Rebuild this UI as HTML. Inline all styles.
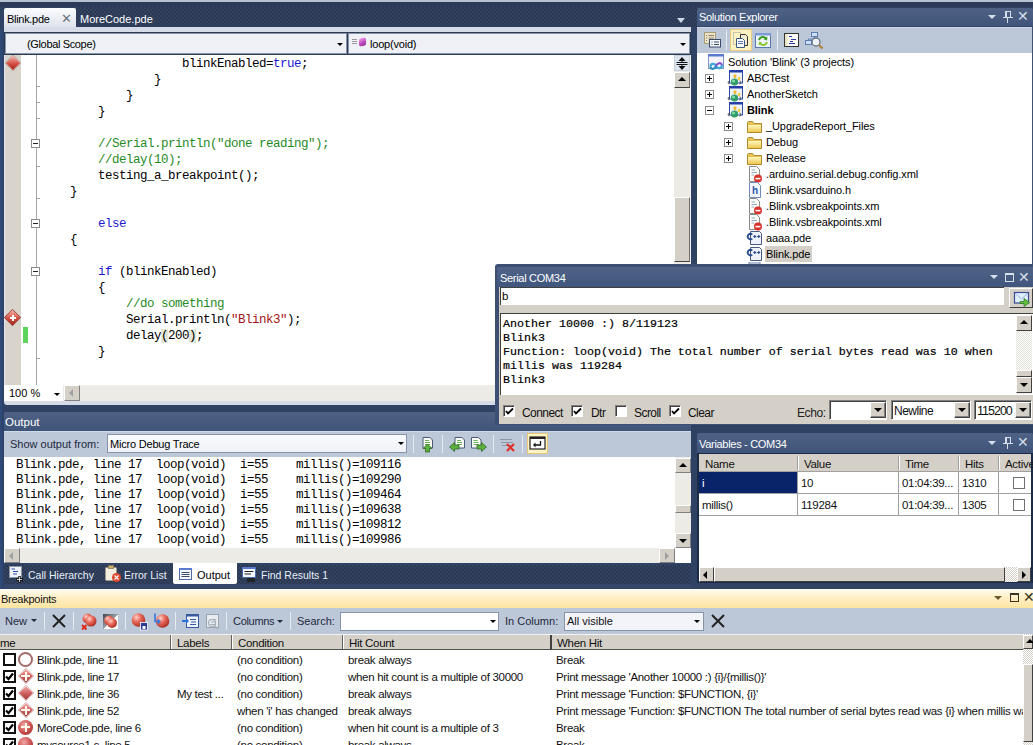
<!DOCTYPE html>
<html><head><meta charset="utf-8">
<style>
*{margin:0;padding:0;box-sizing:border-box}
html,body{width:1033px;height:745px;overflow:hidden}
body{position:relative;background:#304264;font-family:"Liberation Sans",sans-serif;font-size:11px;color:#000}
.a{position:absolute}
.t{position:absolute;white-space:pre;line-height:1}
.m{font-family:"Liberation Mono",monospace;font-size:11.67px}
.w{color:#fff}
.tb{background:linear-gradient(#4f6286,#3f5479)}
.gray{background:#d4d0c8}
.tex{position:absolute;background:repeating-conic-gradient(#2a3856 0 25%,#34445f 0 50%) 0 0/4px 4px}
.sep{position:absolute;width:1px;background:#8593ab;border-right:1px solid #e6ebf2}
</style></head><body>
<!-- top strip -->
<div class="a" style="left:0;top:0;width:1033px;height:2px;background:#b6c1d4"></div>
<div class="a" style="left:0;top:2px;width:1033px;height:5px;background:#2b3a57"></div>
<div class="a" style="left:0;top:30px;width:4px;height:560px;background:linear-gradient(90deg,#2f4c7c,#2c3f66)"></div>
<div class="tex" style="left:76px;top:7px;width:621px;height:17px"></div>
<div class="a" style="left:76px;top:24px;width:621px;height:3px;background:#2e3d5b"></div>

<!-- ===== Document well ===== -->
<div class="a" style="left:4px;top:8px;width:72px;height:24px;background:linear-gradient(#fbfcfd,#d6dde8);border-radius:2px 2px 0 0"></div>
<div class="t" style="left:7px;top:14px;font-size:11px;letter-spacing:-0.3px;color:#000">Blink.pde</div>
<div class="t" style="left:61px;top:12px;font-size:13px;color:#6f7580">&#x2715;</div>
<div class="t w" style="left:80px;top:14px;font-size:11px">MoreCode.pde</div>
<div class="a" style="left:677px;top:18px;width:0;height:0;border-left:4px solid transparent;border-right:4px solid transparent;border-top:5px solid #cfd8e6"></div>
<div class="a" style="left:4px;top:27px;width:687px;height:5px;background:#d5dce8"></div>
<div class="a" style="left:4px;top:32px;width:687px;height:23px;background:#2c3a52"></div>
<!-- combos -->
<div class="a" style="left:5px;top:33px;width:342px;height:21px;background:#eff1f7;border:1px solid #8795aa"></div>
<div class="t" style="left:27px;top:39px;letter-spacing:-0.35px">(Global Scope)</div>
<div class="a" style="left:337px;top:43px;border-left:3px solid transparent;border-right:3px solid transparent;border-top:3px solid #000"></div>
<div class="a" style="left:348px;top:33px;width:342px;height:21px;background:#eff1f7;border:1px solid #8795aa"></div>
<div class="t" style="left:370px;top:39px;letter-spacing:-0.2px">loop(void)</div>
<div class="a" style="left:352px;top:39px;width:5px;height:1px;background:#9a9a9a;box-shadow:0 2px 0 #9a9a9a,0 4px 0 #9a9a9a"></div>
<div class="a" style="left:359px;top:38px;width:7px;height:8px;background:linear-gradient(160deg,#f7a0f0,#c050c0 55%,#8a2a90);border-radius:2px;transform:skewY(-10deg)"></div>


<div class="a" style="left:680px;top:43px;border-left:3px solid transparent;border-right:3px solid transparent;border-top:3px solid #000"></div>

<!-- editor -->
<div class="a" style="left:4px;top:55px;width:687px;height:330px;background:#fff"></div>
<div class="a" style="left:4px;top:55px;width:17px;height:330px;background:#d8d4cb;border-left:1px solid #e4e4ea"></div>
<div class="a" style="left:36px;top:55px;width:1px;height:330px;background:#a5a5a5"></div>
<div class="a" style="left:7.5px;top:57.5px;width:10px;height:10px;transform:rotate(45deg);background:linear-gradient(135deg,#f7b5ad,#d0473c 60%,#a0281e);box-shadow:0 0 0 0.5px #8a2a20"></div>
<div class="a" style="left:7px;top:312px;width:11px;height:11px;transform:rotate(45deg);background:linear-gradient(135deg,#f7b5ad,#d0473c 60%,#a0281e);box-shadow:0 0 0 0.5px #8a2a20"></div>
<div class="a" style="left:10px;top:317px;width:6px;height:2px;background:#fff"></div><div class="a" style="left:12px;top:315px;width:2px;height:6px;background:#fff"></div>
<div class="a" style="left:23px;top:327px;width:5px;height:16px;background:#5ed35e"></div>

<div class="t m" style="left:182px;top:58px;line-height:13px;font-size:12.5px;letter-spacing:-0.5px"><span>blinkEnabled=</span><span style="color:#1a1ad0">true</span>;</div>
<div class="t m" style="left:154px;top:74px;line-height:13px;font-size:12.5px;letter-spacing:-0.5px">}</div>
<div class="t m" style="left:126px;top:90px;line-height:13px;font-size:12.5px;letter-spacing:-0.5px">}</div>
<div class="t m" style="left:98px;top:106px;line-height:13px;font-size:12.5px;letter-spacing:-0.5px">}</div>
<div class="t m" style="left:98px;top:138px;line-height:13px;font-size:12.5px;letter-spacing:-0.5px"><span style="color:#1f8a1f">//Serial.println("done reading");</span></div>
<div class="t m" style="left:98px;top:154px;line-height:13px;font-size:12.5px;letter-spacing:-0.5px"><span style="color:#1f8a1f">//delay(10);</span></div>
<div class="t m" style="left:98px;top:170px;line-height:13px;font-size:12.5px;letter-spacing:-0.5px">testing_a_breakpoint();</div>
<div class="t m" style="left:70px;top:186px;line-height:13px;font-size:12.5px;letter-spacing:-0.5px">}</div>
<div class="t m" style="left:98px;top:218px;line-height:13px;font-size:12.5px;letter-spacing:-0.5px"><span style="color:#1a1ad0">else</span></div>
<div class="t m" style="left:70px;top:234px;line-height:13px;font-size:12.5px;letter-spacing:-0.5px">{</div>
<div class="t m" style="left:98px;top:266px;line-height:13px;font-size:12.5px;letter-spacing:-0.5px"><span style="color:#1a1ad0">if</span> (blinkEnabled)</div>
<div class="t m" style="left:98px;top:282px;line-height:13px;font-size:12.5px;letter-spacing:-0.5px">{</div>
<div class="t m" style="left:126px;top:298px;line-height:13px;font-size:12.5px;letter-spacing:-0.5px"><span style="color:#1f8a1f">//do something</span></div>
<div class="t m" style="left:126px;top:314px;line-height:13px;font-size:12.5px;letter-spacing:-0.5px">Serial.println(<span style="color:#a31515">"Blink3"</span>);</div>
<div class="t m" style="left:126px;top:330px;line-height:13px;font-size:12.5px;letter-spacing:-0.5px">delay<span style="background:#e2e6d6">(</span>200<span style="background:#e2e6d6">)</span>;</div>
<div class="t m" style="left:98px;top:346px;line-height:13px;font-size:12.5px;letter-spacing:-0.5px">}</div>
<div class="a" style="left:31px;top:139px;width:9px;height:9px;background:#fff;border:1px solid #8c8c8c"></div><div class="a" style="left:33px;top:143px;width:5px;height:1px;background:#222"></div>
<div class="a" style="left:31px;top:219px;width:9px;height:9px;background:#fff;border:1px solid #8c8c8c"></div><div class="a" style="left:33px;top:223px;width:5px;height:1px;background:#222"></div>
<div class="a" style="left:31px;top:267px;width:9px;height:9px;background:#fff;border:1px solid #8c8c8c"></div><div class="a" style="left:33px;top:271px;width:5px;height:1px;background:#222"></div>
<div class="a" style="left:37px;top:86px;width:3px;height:1px;background:#a5a5a5"></div>
<div class="a" style="left:37px;top:102px;width:3px;height:1px;background:#a5a5a5"></div>
<div class="a" style="left:37px;top:118px;width:3px;height:1px;background:#a5a5a5"></div>
<div class="a" style="left:37px;top:166px;width:3px;height:1px;background:#a5a5a5"></div>
<div class="a" style="left:37px;top:198px;width:3px;height:1px;background:#a5a5a5"></div>
<div class="a" style="left:37px;top:358px;width:3px;height:1px;background:#a5a5a5"></div>

<!-- editor vscroll -->
<div class="a" style="left:674px;top:55px;width:17px;height:330px;background:#ecebe6;border-right:1px solid #f4f4f0"></div>
<div class="a" style="left:674px;top:55px;width:16px;height:16px;background:#dfe5ee;border:1px solid #c5cedb"></div>
<svg class="a" style="left:675px;top:56px" width="14" height="15"><path d="M7 1 L3.5 5 H10.5 Z M7 14 L3.5 10 H10.5 Z" fill="#111"/><path d="M1.5 6.5 H12.5 M1.5 8.5 H12.5" stroke="#111" stroke-width="1"/><path d="M7 4 V6 M7 9 V11" stroke="#111"/></svg>
<div class="a" style="left:674px;top:72px;width:16px;height:16px;background:#d4d0c8;border:1px solid;border-color:#fff #707070 #404040 #fff"></div>
<div class="a" style="left:678px;top:77px;border-left:4px solid transparent;border-right:4px solid transparent;border-bottom:4px solid #000"></div>
<div class="a" style="left:674px;top:197px;width:16px;height:65px;background:#d4d0c8;border:1px solid;border-color:#fff #707070 #404040 #fff"></div>

<!-- editor bottom bar -->
<div class="a" style="left:4px;top:385px;width:687px;height:16px;background:#ecebe6"></div>
<div class="a" style="left:4px;top:385px;width:59px;height:16px;background:#fff"></div>
<div class="t" style="left:9px;top:388px">100 %</div>
<div class="a" style="left:54px;top:393px;border-left:3px solid transparent;border-right:3px solid transparent;border-top:3px solid #000"></div>
<div class="a" style="left:64px;top:385px;width:16px;height:16px;background:#d4d0c8;border:1px solid;border-color:#fff #808080 #808080 #fff"></div>
<div class="a" style="left:69px;top:389px;border-top:4px solid transparent;border-bottom:4px solid transparent;border-right:4px solid #a0a0a0"></div>
<div class="a" style="left:4px;top:401px;width:687px;height:4px;background:#d5dce8;border-radius:0 0 3px 3px"></div>


<!-- ===== Solution Explorer ===== -->
<div class="a tb" style="left:697px;top:8px;width:336px;height:19px;border-radius:2px 2px 0 0"></div>
<div class="t w" style="left:699px;top:12px;font-size:11px;letter-spacing:-0.3px">Solution Explorer</div>
<div class="a" style="left:988px;top:15px;border-left:4px solid transparent;border-right:4px solid transparent;border-top:4px solid #d6deea"></div>
<div class="a" style="left:1005px;top:11px;width:6px;height:7px;border:1px solid #d6deea;border-left-width:2px"></div>
<div class="a" style="left:1003px;top:17px;width:10px;height:1px;background:#d6deea"></div>
<div class="a" style="left:1007px;top:18px;width:1px;height:5px;background:#d6deea"></div>
<div class="t" style="left:1017px;top:9px;font-size:14px;color:#d6deea">&#x2715;</div>
<div class="a" style="left:697px;top:26px;width:336px;height:1px;background:#35456a"></div><div class="a" style="left:697px;top:27px;width:335px;height:26px;background:#bcc7d8;border-top:1px solid #cdd8ea"></div>
<div class="a" style="left:1032px;top:27px;width:1px;height:237px;background:#40516f"></div>
<!-- toolbar icons -->
<svg class="a" style="left:703px;top:31px" width="19" height="17"><rect x="1.5" y="1.5" width="11" height="11" fill="#ece4c8" stroke="#a89c78"/><path d="M3 4.5H4M3 7H4M3 9.5H4M5.5 4.5H11M5.5 7H11" stroke="#8a8060"/><rect x="6.5" y="8.5" width="11" height="7.5" fill="#f6f8fc" stroke="#3a4a6a"/><path d="M8.5 11H9.5M8.5 13.5H9.5M11 11H16M11 13.5H16" stroke="#3a4a6a"/></svg>
<div class="sep" style="left:726px;top:30px;height:20px"></div>
<div class="a" style="left:730px;top:29px;width:22px;height:22px;background:#fdf2c2;border:1px solid #eacb7e"></div>
<svg class="a" style="left:732px;top:31px" width="18" height="18"><path d="M1.5 1.5H8.5V13.5H1.5Z" fill="none" stroke="#999" stroke-dasharray="1 1"/><path d="M8.5 3.5H13.5L15.5 5.5V14.5H8.5Z" fill="#f4ecd0" stroke="#333"/><path d="M4.5 7.5H10.5L12.5 9.5V16.5H4.5Z" fill="#fafcff" stroke="#3a5a8a"/><path d="M6 10.5H11M6 12.5H11" stroke="#5a7ab0"/></svg>
<svg class="a" style="left:754px;top:32px" width="18" height="17"><rect x="1.5" y="1.5" width="15" height="14" fill="#f0f4fa" stroke="#5a78b0"/><rect x="1" y="1" width="16" height="2.5" fill="#7a9ad8"/><path d="M5 8 A4 4 0 0 1 12 6.5" stroke="#3c9a20" stroke-width="2" fill="none"/><path d="M13.5 4.5 L13 8.5 L9.5 7.2Z" fill="#3c9a20"/><path d="M13 10 A4 4 0 0 1 6 11.5" stroke="#8ac830" stroke-width="2" fill="none"/><path d="M4.5 13.5 L5 9.5 L8.5 10.8Z" fill="#8ac830"/></svg>
<div class="sep" style="left:777px;top:30px;height:20px"></div>
<svg class="a" style="left:784px;top:33px" width="16" height="15"><rect x="0.5" y="0.5" width="14" height="13" fill="#fbfbf8" stroke="#333"/><rect x="1" y="1" width="2.5" height="12" fill="#e8e2c8"/><path d="M5 3.5H8M7 6.5H12M6 8.5H9M5 10.5H11" stroke="#2838a0"/></svg>
<svg class="a" style="left:805px;top:31px" width="19" height="19"><rect x="6.5" y="1.5" width="6" height="4" fill="#cfe0f5" stroke="#5b7fb5"/><rect x="0.5" y="9.5" width="6" height="4" fill="#cfe0f5" stroke="#5b7fb5"/><path d="M9.5 5.5V8H3.5V9.5" stroke="#5b7fb5" fill="none"/><circle cx="11" cy="11" r="4" fill="#eef3f8" stroke="#6a7480" stroke-width="1.3"/><path d="M14 14 L17.5 17.5" stroke="#b08040" stroke-width="2.2"/></svg>
<div class="a" style="left:1032px;top:27px;width:1px;height:237px;background:#40516f"></div>
<!-- tree -->
<div class="a" style="left:697px;top:53px;width:335px;height:211px;background:#fff;overflow:hidden"></div>
<svg width="0" height="0" style="position:absolute"><defs><linearGradient id="fg" x1="0" y1="0" x2="0" y2="1"><stop offset="0" stop-color="#fff6c0"/><stop offset="1" stop-color="#efc850"/></linearGradient></defs></svg>
<svg class="a" style="left:707px;top:54px" width="18" height="17"><rect x="1.5" y="0.5" width="15" height="14" fill="#f4f2fb" stroke="#7f95c8"/><rect x="1" y="0" width="16" height="2.5" fill="#5a7ad0"/><path d="M3.5 12.5 C3.5 9 8 9 9 12 C10 15 15 15 15 11" stroke="#3aa8d8" stroke-width="2.2" fill="none"/><path d="M9 12 C10 9 14 8 15 11" stroke="#8a50c8" stroke-width="2.2" fill="none"/><path d="M3.5 12.5 C3.5 16 8 15.5 9 12" stroke="#2f8ac0" stroke-width="2.2" fill="none"/></svg>
<div class="t" style="left:728px;top:57px;font-size:11px;letter-spacing:-0.1px;">Solution 'Blink' (3 projects)</div>
<div class="a" style="left:705px;top:74px;width:9px;height:9px;border:1px solid #8c8c8c;background:#fff"></div>
<div class="a" style="left:707px;top:78px;width:5px;height:1px;background:#000"></div>
<div class="a" style="left:709px;top:76px;width:1px;height:5px;background:#000"></div>
<svg class="a" style="left:727px;top:70px" width="17" height="16"><rect x="2.5" y="0.5" width="13" height="12.5" fill="#eef3fb" stroke="#3050a8"/><rect x="2" y="0" width="14" height="2.5" fill="#2440a8"/><path d="M8 3.5 L8.7 5.3 L10.5 5.5 L9 6.6 L9.5 8.5 L8 7.4 L6.5 8.5 L7 6.6 L5.5 5.5 L7.3 5.3Z" fill="#f0b820"/><path d="M12 6 L12.6 7.6 L14 7.8 L12.9 8.8 L13.2 10.4 L12 9.5 L10.8 10.4 L11.1 8.8 L10 7.8 L11.4 7.6Z" fill="#f4c830"/><circle cx="7.5" cy="12" r="3.6" fill="#2f9a6a"/><circle cx="6.6" cy="11" r="1.6" fill="#7fd8a0"/><path d="M2.5 11 L0.8 12.5 L2.5 14 M12.5 11 L14.2 12.5 L12.5 14" stroke="#222" stroke-width="0.9" fill="none"/></svg>
<div class="t" style="left:747px;top:73px;font-size:11px;letter-spacing:-0.1px;">ABCTest</div>
<div class="a" style="left:705px;top:90px;width:9px;height:9px;border:1px solid #8c8c8c;background:#fff"></div>
<div class="a" style="left:707px;top:94px;width:5px;height:1px;background:#000"></div>
<div class="a" style="left:709px;top:92px;width:1px;height:5px;background:#000"></div>
<svg class="a" style="left:727px;top:86px" width="17" height="16"><rect x="2.5" y="0.5" width="13" height="12.5" fill="#eef3fb" stroke="#3050a8"/><rect x="2" y="0" width="14" height="2.5" fill="#2440a8"/><path d="M8 3.5 L8.7 5.3 L10.5 5.5 L9 6.6 L9.5 8.5 L8 7.4 L6.5 8.5 L7 6.6 L5.5 5.5 L7.3 5.3Z" fill="#f0b820"/><path d="M12 6 L12.6 7.6 L14 7.8 L12.9 8.8 L13.2 10.4 L12 9.5 L10.8 10.4 L11.1 8.8 L10 7.8 L11.4 7.6Z" fill="#f4c830"/><circle cx="7.5" cy="12" r="3.6" fill="#2f9a6a"/><circle cx="6.6" cy="11" r="1.6" fill="#7fd8a0"/><path d="M2.5 11 L0.8 12.5 L2.5 14 M12.5 11 L14.2 12.5 L12.5 14" stroke="#222" stroke-width="0.9" fill="none"/></svg>
<div class="t" style="left:747px;top:89px;font-size:11px;letter-spacing:-0.1px;">AnotherSketch</div>
<div class="a" style="left:705px;top:106px;width:9px;height:9px;border:1px solid #8c8c8c;background:#fff"></div>
<div class="a" style="left:707px;top:110px;width:5px;height:1px;background:#000"></div>
<svg class="a" style="left:727px;top:102px" width="17" height="16"><rect x="2.5" y="0.5" width="13" height="12.5" fill="#eef3fb" stroke="#3050a8"/><rect x="2" y="0" width="14" height="2.5" fill="#2440a8"/><path d="M8 3.5 L8.7 5.3 L10.5 5.5 L9 6.6 L9.5 8.5 L8 7.4 L6.5 8.5 L7 6.6 L5.5 5.5 L7.3 5.3Z" fill="#f0b820"/><path d="M12 6 L12.6 7.6 L14 7.8 L12.9 8.8 L13.2 10.4 L12 9.5 L10.8 10.4 L11.1 8.8 L10 7.8 L11.4 7.6Z" fill="#f4c830"/><circle cx="7.5" cy="12" r="3.6" fill="#2f9a6a"/><circle cx="6.6" cy="11" r="1.6" fill="#7fd8a0"/><path d="M2.5 11 L0.8 12.5 L2.5 14 M12.5 11 L14.2 12.5 L12.5 14" stroke="#222" stroke-width="0.9" fill="none"/></svg>
<div class="t" style="left:747px;top:105px;font-size:11px;letter-spacing:-0.1px;font-weight:bold;">Blink</div>
<div class="a" style="left:724px;top:122px;width:9px;height:9px;border:1px solid #8c8c8c;background:#fff"></div>
<div class="a" style="left:726px;top:126px;width:5px;height:1px;background:#000"></div>
<div class="a" style="left:728px;top:124px;width:1px;height:5px;background:#000"></div>
<svg class="a" style="left:746px;top:119px" width="17" height="15"><path d="M1.5 3.5 V13.5 H15.5 V4.5 H8 L6.5 2.5 H2.5 Z" fill="#e8c250" stroke="#b08a28"/><path d="M2 6 H15 V13 H2 Z" fill="url(#fg)"/></svg>
<div class="t" style="left:766px;top:121px;font-size:11px;letter-spacing:-0.1px;">_UpgradeReport_Files</div>
<div class="a" style="left:724px;top:138px;width:9px;height:9px;border:1px solid #8c8c8c;background:#fff"></div>
<div class="a" style="left:726px;top:142px;width:5px;height:1px;background:#000"></div>
<div class="a" style="left:728px;top:140px;width:1px;height:5px;background:#000"></div>
<svg class="a" style="left:746px;top:135px" width="17" height="15"><path d="M1.5 3.5 V13.5 H15.5 V4.5 H8 L6.5 2.5 H2.5 Z" fill="#e8c250" stroke="#b08a28"/><path d="M2 6 H15 V13 H2 Z" fill="url(#fg)"/></svg>
<div class="t" style="left:766px;top:137px;font-size:11px;letter-spacing:-0.1px;">Debug</div>
<div class="a" style="left:724px;top:154px;width:9px;height:9px;border:1px solid #8c8c8c;background:#fff"></div>
<div class="a" style="left:726px;top:158px;width:5px;height:1px;background:#000"></div>
<div class="a" style="left:728px;top:156px;width:1px;height:5px;background:#000"></div>
<svg class="a" style="left:746px;top:151px" width="17" height="15"><path d="M1.5 3.5 V13.5 H15.5 V4.5 H8 L6.5 2.5 H2.5 Z" fill="#e8c250" stroke="#b08a28"/><path d="M2 6 H15 V13 H2 Z" fill="url(#fg)"/></svg>
<div class="t" style="left:766px;top:153px;font-size:11px;letter-spacing:-0.1px;">Release</div>
<svg class="a" style="left:748px;top:166px" width="15" height="17"><path d="M1.5 0.5 H8.5 L11.5 3.5 V15.5 H1.5 Z" fill="#fcfcf8" stroke="#8a8a8a"/><path d="M3.5 4H7M3.5 6.5H9M3.5 9H6" stroke="#9aaac0"/><circle cx="10" cy="12.5" r="4" fill="#d8302a"/><rect x="7.5" y="11.8" width="5" height="1.6" fill="#fff"/></svg>
<div class="t" style="left:766px;top:169px;font-size:11px;letter-spacing:-0.1px;">.arduino.serial.debug.config.xml</div>
<svg class="a" style="left:749px;top:182px" width="13" height="16"><path d="M0.5 0.5 H8.5 L11.5 3.5 V15.5 H0.5 Z" fill="#f2f6fc" stroke="#6f8cb8"/><text x="3" y="12" font-family="Liberation Sans" font-weight="bold" font-size="10" fill="#2a56a8">h</text></svg>
<div class="t" style="left:766px;top:185px;font-size:11px;letter-spacing:-0.1px;">.Blink.vsarduino.h</div>
<svg class="a" style="left:748px;top:198px" width="15" height="17"><path d="M1.5 0.5 H8.5 L11.5 3.5 V15.5 H1.5 Z" fill="#fcfcf8" stroke="#8a8a8a"/><path d="M3.5 4H7M3.5 6.5H9M3.5 9H6" stroke="#9aaac0"/><circle cx="10" cy="12.5" r="4" fill="#d8302a"/><rect x="7.5" y="11.8" width="5" height="1.6" fill="#fff"/></svg>
<div class="t" style="left:766px;top:201px;font-size:11px;letter-spacing:-0.1px;">.Blink.vsbreakpoints.xm</div>
<svg class="a" style="left:748px;top:214px" width="15" height="17"><path d="M1.5 0.5 H8.5 L11.5 3.5 V15.5 H1.5 Z" fill="#fcfcf8" stroke="#8a8a8a"/><path d="M3.5 4H7M3.5 6.5H9M3.5 9H6" stroke="#9aaac0"/><circle cx="10" cy="12.5" r="4" fill="#d8302a"/><rect x="7.5" y="11.8" width="5" height="1.6" fill="#fff"/></svg>
<div class="t" style="left:766px;top:217px;font-size:11px;letter-spacing:-0.1px;">.Blink.vsbreakpoints.xml</div>
<svg class="a" style="left:746px;top:230px" width="17" height="16"><path d="M4.5 1.5 H13.5 L15.5 3.5 V14.5 H4.5 Z" fill="#eef2fa" stroke="#4a5a78"/><path d="M6.3 4.6 A2.7 2.7 0 1 0 6.3 8.6" stroke="#254a90" stroke-width="1.8" fill="none"/><path d="M7.3 6.5H10.3M8.8 5V8M11.2 6.5H14.2M12.7 5V8" stroke="#254a90" stroke-width="1.2"/></svg>
<div class="t" style="left:766px;top:233px;font-size:11px;letter-spacing:-0.1px;">aaaa.pde</div>
<svg class="a" style="left:746px;top:246px" width="17" height="16"><path d="M4.5 1.5 H13.5 L15.5 3.5 V14.5 H4.5 Z" fill="#eef2fa" stroke="#4a5a78"/><path d="M6.3 4.6 A2.7 2.7 0 1 0 6.3 8.6" stroke="#254a90" stroke-width="1.8" fill="none"/><path d="M7.3 6.5H10.3M8.8 5V8M11.2 6.5H14.2M12.7 5V8" stroke="#254a90" stroke-width="1.2"/></svg>
<div class="a" style="left:765px;top:246px;width:47px;height:16px;background:#d4d0c8"></div>
<div class="t" style="left:766px;top:249px;font-size:11px;letter-spacing:-0.1px;">Blink.pde</div>
<svg class="a" style="left:748px;top:262px" width="15" height="2"><rect x="1" y="0" width="11" height="2" fill="#f4f7fc" stroke="#7088b0"/></svg>
<!-- ===== Output panel ===== -->
<div class="a tb" style="left:4px;top:412px;width:687px;height:19px;border-radius:2px 2px 0 0"></div>
<div class="t w" style="left:5px;top:417px;font-size:11.5px">Output</div>
<div class="a" style="left:4px;top:431px;width:687px;height:26px;background:#bcc7d8;border-top:1px solid #cdd8ea"></div>
<div class="t" style="left:10px;top:439px;font-size:11px;color:#1e2a3e">Show output from:</div>
<div class="a" style="left:107px;top:434px;width:300px;height:19px;background:linear-gradient(#fafbfd,#eef1f7);border:1px solid #8795aa"></div>
<div class="t" style="left:110px;top:439px;font-size:11px;letter-spacing:-0.2px">Micro Debug Trace</div>
<div class="a" style="left:398px;top:442px;border-left:3px solid transparent;border-right:3px solid transparent;border-top:3px solid #000"></div>
<div class="sep" style="left:413px;top:435px;height:18px"></div>
<svg class="a" style="left:421px;top:436px" width="14" height="17"><path d="M2 1.5 H9 L11.5 4 V12 H2 Z" fill="#fafbf6" stroke="#4a5a78"/><path d="M4 4.5H8M4 6.5H9M4 8.5H9" stroke="#6cae5a"/><path d="M6.5 8 L2 12.5 H4.5 V16 H8.5 V12.5 H11 Z" fill="#5cb040" stroke="#2f6a20" stroke-width="0.8"/></svg>
<div class="sep" style="left:442px;top:435px;height:18px"></div>
<svg class="a" style="left:448px;top:436px" width="18" height="17"><path d="M7 1.5 H14 L16.5 4 V12 H7 Z" fill="#fafbf6" stroke="#4a5a78"/><path d="M9 4.5H13M9 6.5H14M9 8.5H14" stroke="#6cae5a"/><path d="M1.5 11 L6.5 6.5 V9 H11 V13 H6.5 V15.5 Z" fill="#5cb040" stroke="#2f6a20" stroke-width="0.8"/></svg>
<svg class="a" style="left:470px;top:436px" width="18" height="17"><path d="M1.5 1.5 H8.5 L11 4 V12 H1.5 Z" fill="#fafbf6" stroke="#4a5a78"/><path d="M3.5 4.5H7.5M3.5 6.5H8.5M3.5 8.5H8.5" stroke="#6cae5a"/><path d="M16.5 11 L11.5 6.5 V9 H7 V13 H11.5 V15.5 Z" fill="#5cb040" stroke="#2f6a20" stroke-width="0.8"/></svg>
<div class="sep" style="left:493px;top:435px;height:18px"></div>
<svg class="a" style="left:499px;top:437px" width="18" height="16"><path d="M1 2.5H13M2 5.5H14M3 8.5H12" stroke="#8d96a8" stroke-width="1"/><path d="M8 7 L15 14 M15 7 L8 14" stroke="#e0302a" stroke-width="2.2"/></svg>
<div class="sep" style="left:522px;top:435px;height:18px"></div>
<div class="a" style="left:527px;top:433px;width:21px;height:21px;background:#fdf2c2;border:1px solid #e8c776"></div>
<svg class="a" style="left:529px;top:436px" width="17" height="15"><rect x="1" y="1" width="15" height="12" fill="#fff" stroke="#222" stroke-width="1.2"/><rect x="1" y="1" width="15" height="2" fill="#222"/><path d="M11.5 5 V9 H5" stroke="#111" stroke-width="1.3" fill="none"/><path d="M4 9 L6.5 6.5 V11.5 Z" fill="#111"/></svg>
<!-- text -->
<div class="a" style="left:4px;top:457px;width:687px;height:91px;background:#fff"></div>
<div class="t m" style="left:16px;top:458px;line-height:15px;font-size:12.5px;letter-spacing:-0.5px;color:#000">Blink.pde, line 17  loop(void)  i=55    millis()=109116
Blink.pde, line 17  loop(void)  i=55    millis()=109290
Blink.pde, line 17  loop(void)  i=55    millis()=109464
Blink.pde, line 17  loop(void)  i=55    millis()=109638
Blink.pde, line 17  loop(void)  i=55    millis()=109812
Blink.pde, line 17  loop(void)  i=55    millis()=109986</div>
<div class="a" style="left:675px;top:457px;width:16px;height:91px;background:#ecebe6"></div>
<div class="a" style="left:675px;top:458px;width:16px;height:15px;background:#d4d0c8;border:1px solid;border-color:#fff #808080 #808080 #fff"></div>
<div class="a" style="left:679px;top:463px;border-left:4px solid transparent;border-right:4px solid transparent;border-bottom:4px solid #000"></div>
<div class="a" style="left:675px;top:505px;width:16px;height:8px;background:#d4d0c8;border:1px solid;border-color:#fff #808080 #808080 #fff"></div>
<div class="a" style="left:675px;top:533px;width:16px;height:15px;background:#d4d0c8;border:1px solid;border-color:#fff #808080 #808080 #fff"></div>
<div class="a" style="left:679px;top:539px;border-left:4px solid transparent;border-right:4px solid transparent;border-top:4px solid #000"></div>
<div class="a" style="left:4px;top:548px;width:671px;height:15px;background:#ecebe6"></div>
<div class="a" style="left:4px;top:548px;width:16px;height:15px;background:#d4d0c8;border:1px solid;border-color:#fff #808080 #808080 #fff"></div>
<div class="a" style="left:9px;top:552px;border-top:4px solid transparent;border-bottom:4px solid transparent;border-right:4px solid #a0a0a0"></div>
<div class="a" style="left:659px;top:548px;width:16px;height:15px;background:#d4d0c8;border:1px solid;border-color:#fff #808080 #808080 #fff"></div>
<div class="a" style="left:665px;top:552px;border-top:4px solid transparent;border-bottom:4px solid transparent;border-left:4px solid #a0a0a0"></div>
<div class="a" style="left:675px;top:548px;width:16px;height:15px;background:#fff"></div>
<!-- tabs -->
<div class="tex" style="left:4px;top:565px;width:687px;height:19px"></div>
<div class="a" style="left:4px;top:584px;width:687px;height:4px;background:#34466a"></div>
<div class="a" style="left:173px;top:563px;width:64px;height:21px;background:#fff;border-radius:0 0 2px 2px"></div>
<svg class="a" style="left:8px;top:566px" width="18" height="18"><rect x="1.5" y="0.5" width="12" height="11" fill="#f0f4fa" stroke="#8a96a8"/><path d="M3.5 3H7M5 5.5H10M5 8H9" stroke="#3050b0"/><path d="M11.5 10 V17 M8 13.5 H15" stroke="#111" stroke-width="2.4"/><path d="M11.5 10.8 V16.2 M8.8 13.5 H14.2" stroke="#fff" stroke-width="0.8"/></svg>
<div class="t" style="left:28px;top:570px;font-size:10.5px;color:#e8eef8">Call Hierarchy</div>
<svg class="a" style="left:104px;top:565px" width="18" height="18"><rect x="1.5" y="2.5" width="11" height="13" rx="1" fill="#f2eee0" stroke="#a09a88"/><rect x="4.5" y="0.5" width="5" height="3" fill="#c8b070" stroke="#8a7a50" stroke-width="0.8"/><circle cx="12.5" cy="12.5" r="4.5" fill="#e0452e"/><path d="M10.5 10.5 L14.5 14.5 M14.5 10.5 L10.5 14.5" stroke="#fff" stroke-width="1.1"/></svg>
<div class="t" style="left:124px;top:570px;font-size:10.5px;color:#e8eef8">Error List</div>
<svg class="a" style="left:178px;top:567px" width="15" height="14"><rect x="1.5" y="1.5" width="12" height="11" fill="#f4f7fc" stroke="#4a6aa8"/><rect x="1" y="1" width="13" height="2" fill="#5a7ad0"/><path d="M3.5 5.5H11.5M3.5 7.5H11.5M3.5 9.5H11.5" stroke="#3a4a70"/></svg>
<div class="t" style="left:197px;top:570px;font-size:11px;color:#000">Output</div>
<svg class="a" style="left:241px;top:566px" width="16" height="18"><rect x="1.5" y="1.5" width="13" height="10" fill="#f4f7fc" stroke="#4a6aa8"/><rect x="1" y="1" width="14" height="2" fill="#5a7ad0"/><path d="M3.5 5.5H12.5M3.5 8H10" stroke="#222"/><circle cx="8" cy="14" r="2.2" fill="#222"/><circle cx="12" cy="14" r="2.2" fill="#222"/></svg>
<div class="t" style="left:261px;top:570px;font-size:10.5px;color:#e8eef8">Find Results 1</div>
<!-- ===== Variables ===== -->
<div class="a tb" style="left:697px;top:433px;width:336px;height:20px;border-radius:2px 2px 0 0"></div>
<div class="t w" style="left:699px;top:439px;font-size:11px;letter-spacing:-0.3px">Variables - COM34</div>
<div class="a" style="left:988px;top:441px;border-left:4px solid transparent;border-right:4px solid transparent;border-top:4px solid #d6deea"></div>
<div class="a" style="left:1005px;top:437px;width:6px;height:7px;border:1px solid #d6deea;border-left-width:2px"></div>
<div class="a" style="left:1003px;top:443px;width:10px;height:1px;background:#d6deea"></div>
<div class="a" style="left:1007px;top:444px;width:1px;height:5px;background:#d6deea"></div>
<div class="t" style="left:1017px;top:435px;font-size:14px;color:#d6deea">&#x2715;</div>
<div class="a" style="left:697px;top:453px;width:336px;height:130px;background:#1b2a45"></div>
<div class="a" style="left:699px;top:454px;width:332px;height:128px;background:#fff"></div>
<div class="a" style="left:699px;top:454px;width:332px;height:18px;background:#d4d0c8;border-bottom:1px solid #a0a0a0"></div>
<div class="t" style="left:705px;top:459px;font-size:11.5px;letter-spacing:-0.3px;color:#111">Name</div>
<div class="t" style="left:804px;top:459px;font-size:11.5px;letter-spacing:-0.3px;color:#111">Value</div>
<div class="a" style="left:797px;top:456px;width:2px;height:14px;background:#fff;border-left:1px solid #a0a0a0"></div>
<div class="t" style="left:905px;top:459px;font-size:11.5px;letter-spacing:-0.3px;color:#111">Time</div>
<div class="a" style="left:898px;top:456px;width:2px;height:14px;background:#fff;border-left:1px solid #a0a0a0"></div>
<div class="t" style="left:965px;top:459px;font-size:11.5px;letter-spacing:-0.3px;color:#111">Hits</div>
<div class="a" style="left:958px;top:456px;width:2px;height:14px;background:#fff;border-left:1px solid #a0a0a0"></div>
<div class="t" style="left:1005px;top:459px;font-size:11.5px;letter-spacing:-0.3px;color:#111">Active</div>
<div class="a" style="left:998px;top:456px;width:2px;height:14px;background:#fff;border-left:1px solid #a0a0a0"></div>
<div class="a" style="left:699px;top:472px;width:99px;height:21px;background:#0a246a"></div>
<div class="t" style="left:702px;top:478px;font-size:11.5px;letter-spacing:-0.3px;color:#fff">i</div>
<div class="t" style="left:801px;top:478px;font-size:11.5px;letter-spacing:-0.3px;color:#111">10</div>
<div class="t" style="left:902px;top:478px;font-size:11.5px;letter-spacing:-0.3px;color:#111">01:04:39...</div>
<div class="t" style="left:962px;top:478px;font-size:11.5px;letter-spacing:-0.3px;color:#111">1310</div>
<div class="a" style="left:1013px;top:477px;width:12px;height:12px;background:#fff;border:1px solid #707070"></div>
<div class="a" style="left:699px;top:493px;width:332px;height:1px;background:#a0a0a0"></div>
<div class="t" style="left:702px;top:500px;font-size:11.5px;letter-spacing:-0.3px;color:#111">millis()</div>
<div class="t" style="left:801px;top:500px;font-size:11.5px;letter-spacing:-0.3px;color:#111">119284</div>
<div class="t" style="left:902px;top:500px;font-size:11.5px;letter-spacing:-0.3px;color:#111">01:04:39...</div>
<div class="t" style="left:962px;top:500px;font-size:11.5px;letter-spacing:-0.3px;color:#111">1305</div>
<div class="a" style="left:1013px;top:499px;width:12px;height:12px;background:#fff;border:1px solid #707070"></div>
<div class="a" style="left:699px;top:515px;width:332px;height:1px;background:#a0a0a0"></div>
<div class="a" style="left:797px;top:472px;width:1px;height:44px;background:#a0a0a0"></div>
<div class="a" style="left:898px;top:472px;width:1px;height:44px;background:#a0a0a0"></div>
<div class="a" style="left:958px;top:472px;width:1px;height:44px;background:#a0a0a0"></div>
<div class="a" style="left:998px;top:472px;width:1px;height:44px;background:#a0a0a0"></div>
<div class="a" style="left:699px;top:567px;width:332px;height:15px;background:#d4d0c8"></div>
<div class="a" style="left:699px;top:567px;width:15px;height:15px;background:#d4d0c8;border:1px solid;border-color:#fff #404040 #404040 #fff"></div>
<div class="a" style="left:703px;top:571px;border-top:4px solid transparent;border-bottom:4px solid transparent;border-right:4px solid #000"></div>
<div class="a" style="left:714px;top:567px;width:291px;height:15px;background:#d4d0c8;border:1px solid;border-color:#fff #404040 #404040 #fff"></div>
<div class="a" style="left:1005px;top:567px;width:13px;height:15px;background:repeating-conic-gradient(#d4d0c8 0 25%,#fff 0 50%) 0 0/2px 2px"></div>
<div class="a" style="left:1017px;top:567px;width:14px;height:15px;background:#d4d0c8;border:1px solid;border-color:#fff #404040 #404040 #fff"></div>
<div class="a" style="left:1022px;top:571px;border-top:4px solid transparent;border-bottom:4px solid transparent;border-left:4px solid #000"></div>


<!-- ===== Breakpoints ===== -->
<div class="a" style="left:0;top:589px;width:1033px;height:19px;background:linear-gradient(#fffcf4,#fff0c8 40%,#fde4a0)"></div>
<div class="t" style="left:1px;top:594px;font-size:11px;letter-spacing:-0.25px;color:#111">Breakpoints</div>
<div class="a" style="left:994px;top:596px;border-left:4px solid transparent;border-right:4px solid transparent;border-top:4px solid #6b5a2a"></div>
<div class="a" style="left:1010px;top:593px;width:9px;height:9px;border:1px solid #3a3320;border-top-width:2px"></div>
<div class="t" style="left:1023px;top:590px;font-size:14px;color:#3a3320">&#x2715;</div>
<div class="a" style="left:0;top:608px;width:1033px;height:26px;background:#bcc7d8"></div>
<div class="t" style="left:5px;top:616px;font-size:11px;color:#1e2a3e">New</div>
<div class="a" style="left:31px;top:619px;border-left:3px solid transparent;border-right:3px solid transparent;border-top:3px solid #1e2a3e"></div>
<div class="sep" style="left:44px;top:612px;height:18px"></div>
<svg class="a" style="left:52px;top:614px" width="14" height="14"><path d="M1 1L13 13M13 1L1 13" stroke="#222" stroke-width="2"/></svg>
<div class="sep" style="left:73px;top:612px;height:18px"></div>
<svg width="0" height="0" style="position:absolute"><defs><radialGradient id="rb" cx="0.35" cy="0.3" r="0.75"><stop offset="0" stop-color="#ffd0c8"/><stop offset="0.45" stop-color="#e86a5c"/><stop offset="1" stop-color="#a8281e"/></radialGradient><linearGradient id="gw" x1="0" y1="0" x2="1" y2="1"><stop offset="0" stop-color="#404448"/><stop offset="0.5" stop-color="#9aa0a8"/><stop offset="0.5" stop-color="#fff"/><stop offset="1" stop-color="#fff"/></linearGradient></defs></svg>
<svg class="a" style="left:79px;top:612px" width="19" height="19"><circle cx="8.5" cy="6.5" r="5" fill="url(#rb)"/><circle cx="12" cy="9" r="5.5" fill="url(#rb)"/><path d="M3 13 L7.5 17.5 M7.5 13 L3 17.5" stroke="#e02a20" stroke-width="2"/></svg>
<svg class="a" style="left:102px;top:613px" width="17" height="17"><path d="M1 1 H16 V16 H1 Z" fill="url(#gw)"/><circle cx="7" cy="7.5" r="4.8" fill="url(#rb)"/><circle cx="10" cy="10" r="5" fill="url(#rb)"/></svg>
<div class="sep" style="left:125px;top:612px;height:18px"></div>
<svg class="a" style="left:130px;top:612px" width="19" height="19"><circle cx="8.5" cy="8" r="6.8" fill="url(#rb)"/><rect x="10.5" y="10.5" width="7" height="7.5" fill="#2a3a90" stroke="#fff" stroke-width="0.8"/><rect x="12.5" y="14" width="3" height="3" fill="#fff"/></svg>
<svg class="a" style="left:152px;top:612px" width="18" height="19"><circle cx="10.5" cy="9" r="6.8" fill="url(#rb)"/><path d="M3 1.5 V9.5 H7" stroke="#3a78d8" stroke-width="1.6" fill="none"/><path d="M9 9.5 L5.5 6.5 V12.5 Z" fill="#3a78d8"/></svg>
<div class="sep" style="left:175px;top:612px;height:18px"></div>
<svg class="a" style="left:181px;top:613px" width="19" height="17"><rect x="5.5" y="1.5" width="12" height="13" fill="#eef4fc" stroke="#3a5aa0"/><rect x="5" y="1" width="13" height="2.5" fill="#3a5aa0"/><path d="M9 6.5H15M10 9H15M9 11.5H15" stroke="#3a5aa0"/><path d="M1 8 H6" stroke="#2a70d8" stroke-width="2"/><path d="M8 8 L5 5 V11 Z" fill="#2a70d8"/></svg>
<svg class="a" style="left:203px;top:613px" width="17" height="17"><rect x="3.5" y="1.5" width="12" height="13" fill="#e8ecf0" stroke="#9aa4b0"/><path d="M7 6.5H13M8 9H13M7 11.5H13" stroke="#a8b0bc"/><circle cx="9" cy="10" r="3.5" fill="none" stroke="#a8b0bc" stroke-width="1.2"/><path d="M11.5 12.5 L15 16" stroke="#a8b0bc" stroke-width="1.5"/></svg>
<div class="sep" style="left:226px;top:612px;height:18px"></div>
<div class="t" style="left:233px;top:616px;font-size:11px;letter-spacing:-0.3px;color:#1e2a3e">Columns</div>
<div class="a" style="left:277px;top:620px;border-left:3px solid transparent;border-right:3px solid transparent;border-top:3px solid #1e2a3e"></div>
<div class="sep" style="left:290px;top:612px;height:18px"></div>
<div class="t" style="left:297px;top:616px;font-size:11px;color:#1e2a3e">Search:</div>
<div class="a" style="left:340px;top:612px;width:159px;height:19px;background:#fff;border:1px solid #8795aa"></div>
<div class="a" style="left:490px;top:620px;border-left:3px solid transparent;border-right:3px solid transparent;border-top:3px solid #000"></div>
<div class="t" style="left:505px;top:616px;font-size:11px;color:#1e2a3e">In Column:</div>
<div class="a" style="left:564px;top:612px;width:140px;height:19px;background:#f2f4f9;border:1px solid #8795aa"></div>
<div class="t" style="left:567px;top:616px;font-size:11px;color:#111">All visible</div>
<div class="a" style="left:694px;top:620px;border-left:3px solid transparent;border-right:3px solid transparent;border-top:3px solid #000"></div>
<svg class="a" style="left:711px;top:614px" width="14" height="14"><path d="M1 1L13 13M13 1L1 13" stroke="#222" stroke-width="2"/></svg>
<!-- header -->
<div class="a" style="left:0;top:634px;width:1023px;height:17px;background:#d4d0c8;border-top:1px solid #f4f4f4;border-bottom:2px solid #505050"></div>
<div class="a" style="left:0;top:650px;width:1023px;height:95px;background:#fff"></div>
<div class="t" style="left:0px;top:638px;font-size:11.5px;letter-spacing:-0.3px;color:#111">me</div>
<div class="t" style="left:177px;top:638px;font-size:11.5px;letter-spacing:-0.3px;color:#111">Labels</div>
<div class="t" style="left:238px;top:638px;font-size:11.5px;letter-spacing:-0.3px;color:#111">Condition</div>
<div class="t" style="left:349px;top:638px;font-size:11.5px;letter-spacing:-0.3px;color:#111">Hit Count</div>
<div class="t" style="left:557px;top:638px;font-size:11.5px;letter-spacing:-0.3px;color:#111">When Hit</div>
<div class="a" style="left:170px;top:635px;width:2px;height:14px;background:#fff;border-left:1px solid #606060"></div>
<div class="a" style="left:231px;top:635px;width:2px;height:14px;background:#fff;border-left:1px solid #606060"></div>
<div class="a" style="left:342px;top:635px;width:2px;height:14px;background:#fff;border-left:1px solid #606060"></div>
<div class="a" style="left:550px;top:635px;width:2px;height:15px;background:#404040"></div>
<div class="a" style="left:3px;top:653px;width:13px;height:13px;background:#fff;border:2px solid #111"></div>
<div class="a" style="left:18px;top:652px;width:15px;height:15px;border-radius:50%;border:2px solid #a36b6b;background:#fff"></div>
<div class="t" style="left:37px;top:655px;font-size:11.5px;letter-spacing:-0.3px;color:#111">Blink.pde, line 11</div>
<div class="t" style="left:237px;top:655px;font-size:11.5px;letter-spacing:-0.3px;color:#111">(no condition)</div>
<div class="t" style="left:348px;top:655px;font-size:11.5px;letter-spacing:-0.3px;color:#111">break always</div>
<div class="t" style="left:556px;top:655px;font-size:11.5px;letter-spacing:-0.3px;color:#111;width:467px;overflow:hidden">Break</div>
<div class="a" style="left:3px;top:670px;width:13px;height:13px;background:#fff;border:2px solid #111"></div>
<svg class="a" style="left:5px;top:672px" width="9" height="9"><path d="M1 4.5 L3.5 7 L8 1.5" stroke="#000" stroke-width="2.2" fill="none"/></svg>
<div class="a" style="left:20.5px;top:671px;width:10px;height:10px;transform:rotate(45deg);background:linear-gradient(135deg,#f4b4b0,#d06262 50%,#a03838);box-shadow:0 0 0 0.5px #9a4040"></div>
<div class="a" style="left:21px;top:675px;width:9px;height:2px;background:#fff8ec"></div><div class="a" style="left:24.5px;top:671.5px;width:2px;height:9px;background:#fff8ec"></div>
<div class="t" style="left:37px;top:672px;font-size:11.5px;letter-spacing:-0.3px;color:#111">Blink.pde, line 17</div>
<div class="t" style="left:237px;top:672px;font-size:11.5px;letter-spacing:-0.3px;color:#111">(no condition)</div>
<div class="t" style="left:348px;top:672px;font-size:11.5px;letter-spacing:-0.3px;color:#111">when hit count is a multiple of 30000</div>
<div class="t" style="left:556px;top:672px;font-size:11.5px;letter-spacing:-0.3px;color:#111;width:467px;overflow:hidden">Print message 'Another 10000 :) {i}/{millis()}'</div>
<div class="a" style="left:3px;top:687px;width:13px;height:13px;background:#fff;border:2px solid #111"></div>
<svg class="a" style="left:5px;top:689px" width="9" height="9"><path d="M1 4.5 L3.5 7 L8 1.5" stroke="#000" stroke-width="2.2" fill="none"/></svg>
<div class="a" style="left:20.5px;top:688px;width:10px;height:10px;transform:rotate(45deg);background:linear-gradient(135deg,#f4b4b0,#d06262 50%,#a03838);box-shadow:0 0 0 0.5px #9a4040"></div>
<div class="t" style="left:37px;top:689px;font-size:11.5px;letter-spacing:-0.3px;color:#111">Blink.pde, line 36</div>
<div class="t" style="left:177px;top:689px;font-size:11.5px;letter-spacing:-0.3px;color:#111">My test ...</div>
<div class="t" style="left:237px;top:689px;font-size:11.5px;letter-spacing:-0.3px;color:#111">(no condition)</div>
<div class="t" style="left:348px;top:689px;font-size:11.5px;letter-spacing:-0.3px;color:#111">break always</div>
<div class="t" style="left:556px;top:689px;font-size:11.5px;letter-spacing:-0.3px;color:#111;width:467px;overflow:hidden">Print message 'Function: $FUNCTION, {i}'</div>
<div class="a" style="left:3px;top:704px;width:13px;height:13px;background:#fff;border:2px solid #111"></div>
<svg class="a" style="left:5px;top:706px" width="9" height="9"><path d="M1 4.5 L3.5 7 L8 1.5" stroke="#000" stroke-width="2.2" fill="none"/></svg>
<div class="a" style="left:20.5px;top:705px;width:10px;height:10px;transform:rotate(45deg);background:linear-gradient(135deg,#f4b4b0,#d06262 50%,#a03838);box-shadow:0 0 0 0.5px #9a4040"></div>
<div class="a" style="left:21px;top:709px;width:9px;height:2px;background:#fff8ec"></div><div class="a" style="left:24.5px;top:705.5px;width:2px;height:9px;background:#fff8ec"></div>
<div class="t" style="left:37px;top:706px;font-size:11.5px;letter-spacing:-0.3px;color:#111">Blink.pde, line 52</div>
<div class="t" style="left:237px;top:706px;font-size:11.5px;letter-spacing:-0.3px;color:#111">when 'i' has changed</div>
<div class="t" style="left:348px;top:706px;font-size:11.5px;letter-spacing:-0.3px;color:#111">break always</div>
<div class="t" style="left:556px;top:706px;font-size:11.5px;letter-spacing:-0.3px;color:#111;width:467px;overflow:hidden">Print message 'Function: $FUNCTION The total number of serial bytes read was {i} when millis was</div>
<div class="a" style="left:3px;top:721px;width:13px;height:13px;background:#fff;border:2px solid #111"></div>
<svg class="a" style="left:5px;top:723px" width="9" height="9"><path d="M1 4.5 L3.5 7 L8 1.5" stroke="#000" stroke-width="2.2" fill="none"/></svg>
<div class="a" style="left:18px;top:720px;width:15px;height:15px;border-radius:50%;background:radial-gradient(circle at 40% 35%,#f2a8a8,#c84a4a 55%,#8a2626)"></div>
<div class="a" style="left:21px;top:726px;width:9px;height:2px;background:#fff8ec"></div><div class="a" style="left:24.5px;top:722.5px;width:2px;height:9px;background:#fff8ec"></div>
<div class="t" style="left:37px;top:723px;font-size:11.5px;letter-spacing:-0.3px;color:#111">MoreCode.pde, line 6</div>
<div class="t" style="left:237px;top:723px;font-size:11.5px;letter-spacing:-0.3px;color:#111">(no condition)</div>
<div class="t" style="left:348px;top:723px;font-size:11.5px;letter-spacing:-0.3px;color:#111">when hit count is a multiple of 3</div>
<div class="t" style="left:556px;top:723px;font-size:11.5px;letter-spacing:-0.3px;color:#111;width:467px;overflow:hidden">Break</div>
<div class="a" style="left:3px;top:738px;width:13px;height:13px;background:#fff;border:2px solid #111"></div>
<svg class="a" style="left:5px;top:740px" width="9" height="9"><path d="M1 4.5 L3.5 7 L8 1.5" stroke="#000" stroke-width="2.2" fill="none"/></svg>
<div class="a" style="left:18px;top:737px;width:15px;height:15px;border-radius:50%;background:radial-gradient(circle at 40% 35%,#f2a8a8,#c84a4a 55%,#8a2626)"></div>
<div class="t" style="left:37px;top:740px;font-size:11.5px;letter-spacing:-0.3px;color:#111">mysource1.c, line 5</div>
<div class="t" style="left:237px;top:740px;font-size:11.5px;letter-spacing:-0.3px;color:#111">(no condition)</div>
<div class="t" style="left:348px;top:740px;font-size:11.5px;letter-spacing:-0.3px;color:#111">break always</div>
<div class="t" style="left:556px;top:740px;font-size:11.5px;letter-spacing:-0.3px;color:#111;width:467px;overflow:hidden">Break</div>
<!-- vscroll -->
<div class="a" style="left:1023px;top:634px;width:10px;height:111px;background:repeating-conic-gradient(#d4d0c8 0 25%,#fff 0 50%) 0 0/2px 2px"></div>
<div class="a" style="left:1023px;top:635px;width:10px;height:14px;background:#d4d0c8;border:1px solid;border-color:#fff #404040 #404040 #fff"></div>
<div class="a" style="left:1026px;top:639px;border-left:4px solid transparent;border-right:4px solid transparent;border-bottom:4px solid #000"></div>
<div class="a" style="left:1023px;top:664px;width:10px;height:78px;background:#d4d0c8;border:1px solid;border-color:#fff #404040 #404040 #fff"></div>

<div style="position:absolute;left:0;top:0;z-index:10">
<!-- ===== Serial COM34 ===== -->
<div class="a" style="left:495px;top:264px;width:538px;height:161px;background:#3d5073;border-radius:3px 0 0 0"></div>
<div class="a" style="left:497px;top:267px;width:536px;height:20px;background:linear-gradient(#4f6388,#41567c)"></div>
<div class="t w" style="left:500px;top:273px;font-size:11px;letter-spacing:-0.3px">Serial COM34</div>
<div class="a" style="left:990px;top:275px;border-left:4px solid transparent;border-right:4px solid transparent;border-top:4px solid #d6deea"></div>
<div class="a" style="left:1005px;top:273px;width:9px;height:9px;border:1px solid #d6deea;border-top-width:2px"></div>
<div class="t" style="left:1018px;top:270px;font-size:14px;color:#d6deea">&#x2715;</div>
<div class="a" style="left:499px;top:287px;width:534px;height:137px;background:#d4d0c8"></div>
<div class="a" style="left:500px;top:287px;width:504px;height:18px;background:#fff;border-top:1px solid #404040;border-left:1px solid #404040"></div>
<div class="t" style="left:502px;top:291px;font-size:11.5px">b</div>
<div class="a" style="left:1009px;top:288px;width:24px;height:20px;background:#d4d0c8;border:1px solid;border-color:#fff #404040 #404040 #fff"></div>
<svg class="a" style="left:1013px;top:291px" width="18" height="16"><rect x="1.5" y="1.5" width="14" height="10.5" fill="#dff0fc" stroke="#3c4c90" stroke-width="1.2"/><path d="M2 2 L8.5 8 L15 2" stroke="#9ab0e0" fill="none"/><path d="M7 10.5 H11 V7.5 L16.5 11.5 L11 15.5 V12.5 H7 Z" fill="#60c040" stroke="#2f7a20" stroke-width="0.8"/></svg>
<div class="a" style="left:500px;top:313px;width:533px;height:82px;background:#fff;border-top:1px solid #404040;border-left:1px solid #404040"></div>
<div class="t m" style="left:503px;top:317px;line-height:14px;font-size:11.67px;-webkit-text-stroke:0.2px #000">Another 10000 :) 8/119123
Blink3
Function: loop(void) The total number of serial bytes read was 10 when
millis was 119284
Blink3</div>
<div class="a" style="left:1016px;top:315px;width:16px;height:79px;background:repeating-conic-gradient(#e4e3de 0 25%,#fbfbfa 0 50%) 0 0/2px 2px"></div>
<div class="a" style="left:1016px;top:315px;width:16px;height:16px;background:#d4d0c8;border:1px solid;border-color:#fff #404040 #404040 #fff"></div>
<div class="a" style="left:1020px;top:320px;border-left:4px solid transparent;border-right:4px solid transparent;border-bottom:4px solid #000"></div>
<div class="a" style="left:1016px;top:370px;width:16px;height:7px;background:#d4d0c8;border:1px solid;border-color:#fff #404040 #404040 #fff"></div>
<div class="a" style="left:1016px;top:377px;width:16px;height:16px;background:#d4d0c8;border:1px solid;border-color:#fff #404040 #404040 #fff"></div>
<div class="a" style="left:1020px;top:383px;border-left:4px solid transparent;border-right:4px solid transparent;border-top:4px solid #000"></div>
<div class="a" style="left:503px;top:405px;width:12px;height:12px;background:#fff;border:1px solid;border-color:#808080 #fff #fff #808080;box-shadow:inset 1px 1px 0 #404040"></div>
<svg class="a" style="left:505px;top:407px" width="9" height="9"><path d="M1 4 L3 6.5 L8 1.5" stroke="#000" stroke-width="1.8" fill="none"/></svg>
<div class="t" style="left:522px;top:407px;font-size:12px;letter-spacing:-0.55px;color:#111">Connect</div>
<div class="a" style="left:571px;top:405px;width:12px;height:12px;background:#fff;border:1px solid;border-color:#808080 #fff #fff #808080;box-shadow:inset 1px 1px 0 #404040"></div>
<svg class="a" style="left:573px;top:407px" width="9" height="9"><path d="M1 4 L3 6.5 L8 1.5" stroke="#000" stroke-width="1.8" fill="none"/></svg>
<div class="t" style="left:591px;top:407px;font-size:12px;letter-spacing:-0.55px;color:#111">Dtr</div>
<div class="a" style="left:615px;top:405px;width:12px;height:12px;background:#fff;border:1px solid;border-color:#808080 #fff #fff #808080;box-shadow:inset 1px 1px 0 #404040"></div>
<div class="t" style="left:634px;top:407px;font-size:12px;letter-spacing:-0.55px;color:#111">Scroll</div>
<div class="a" style="left:669px;top:405px;width:12px;height:12px;background:#fff;border:1px solid;border-color:#808080 #fff #fff #808080;box-shadow:inset 1px 1px 0 #404040"></div>
<svg class="a" style="left:671px;top:407px" width="9" height="9"><path d="M1 4 L3 6.5 L8 1.5" stroke="#000" stroke-width="1.8" fill="none"/></svg>
<div class="t" style="left:688px;top:407px;font-size:12px;letter-spacing:-0.55px;color:#111">Clear</div>
<div class="t" style="left:797px;top:407px;font-size:12px;letter-spacing:-0.4px;color:#222">Echo:</div>
<div class="a" style="left:829px;top:400px;width:58px;height:20px;background:#fff;border:1px solid;border-color:#808080 #fff #fff #808080;box-shadow:inset 1px 1px 0 #404040"></div>
<div class="a" style="left:870px;top:402px;width:16px;height:16px;background:#d4d0c8;border:1px solid;border-color:#fff #404040 #404040 #fff;box-shadow:inset -1px -1px 0 #808080"></div>
<div class="a" style="left:874px;top:408px;border-left:4px solid transparent;border-right:4px solid transparent;border-top:4px solid #000"></div>
<div class="a" style="left:891px;top:400px;width:80px;height:20px;background:#fff;border:1px solid;border-color:#808080 #fff #fff #808080;box-shadow:inset 1px 1px 0 #404040"></div>
<div class="a" style="left:954px;top:402px;width:16px;height:16px;background:#d4d0c8;border:1px solid;border-color:#fff #404040 #404040 #fff;box-shadow:inset -1px -1px 0 #808080"></div>
<div class="a" style="left:958px;top:408px;border-left:4px solid transparent;border-right:4px solid transparent;border-top:4px solid #000"></div>
<div class="t" style="left:894px;top:405px;font-size:12px;letter-spacing:-0.5px;color:#111">Newline</div>
<div class="a" style="left:974px;top:400px;width:58px;height:20px;background:#fff;border:1px solid;border-color:#808080 #fff #fff #808080;box-shadow:inset 1px 1px 0 #404040"></div>
<div class="a" style="left:1015px;top:402px;width:16px;height:16px;background:#d4d0c8;border:1px solid;border-color:#fff #404040 #404040 #fff;box-shadow:inset -1px -1px 0 #808080"></div>
<div class="a" style="left:1019px;top:408px;border-left:4px solid transparent;border-right:4px solid transparent;border-top:4px solid #000"></div>
<div class="t" style="left:977px;top:405px;font-size:12.5px;letter-spacing:-1px;color:#111">115200</div>


</div>
</body></html>
